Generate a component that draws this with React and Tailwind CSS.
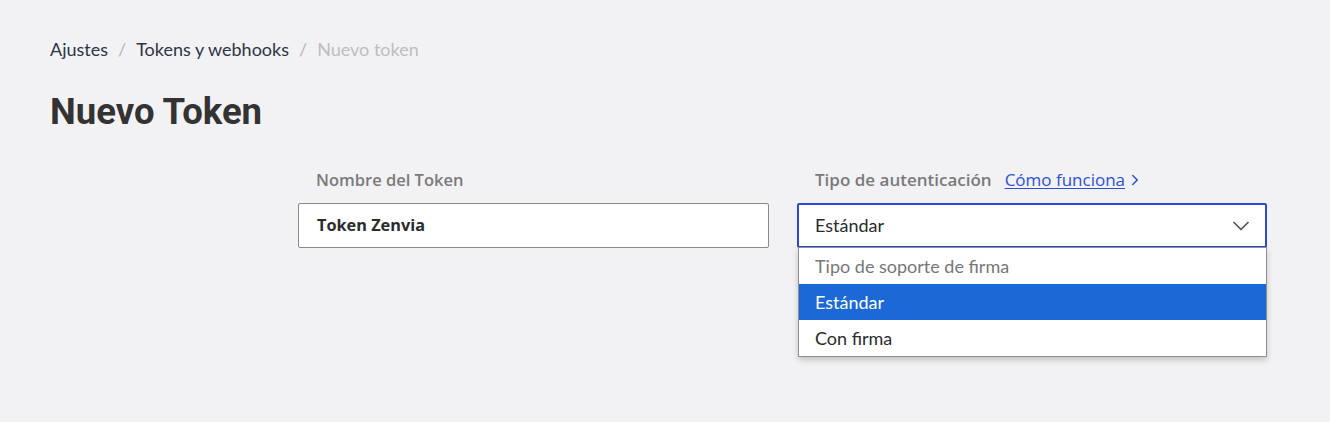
import React from 'react';
import { ChevronDown, ChevronRight } from 'lucide-react';

const App = () => {
    return (
        <div className="min-h-[422px] w-full bg-[#f2f2f4] pl-[50px] pt-[38px] text-[#333]" style={{ fontFamily: 'Lato, "Noto Sans", sans-serif' }}>

            {/* Breadcrumb */}
            <nav className="flex items-center text-[18px] leading-[22px]">
                <span className="text-[#2e3447]">Ajustes</span>
                <span className="mx-[10px] text-[#b5b5b8]">/</span>
                <span className="text-[#2e3447]">Tokens y webhooks</span>
                <span className="mx-[10px] text-[#b5b5b8]">/</span>
                <span className="text-[#bdbdc0]">Nuevo token</span>
            </nav>

            {/* Title */}
            <h1 className="mt-[30px] text-[36.5px] font-bold leading-[44px] text-[#333]" style={{ fontFamily: 'Roboto, sans-serif' }}>
                Nuevo Token
            </h1>

            {/* Form */}
            <div className="ml-[248px] mt-[35px] flex gap-[28px]" style={{ fontFamily: '"Open Sans", sans-serif' }}>

                {/* Token name */}
                <div className="w-[471px]">
                    <label className="block pl-[18px] text-[16.5px] font-semibold leading-[22px] text-[#7a7a7a]">Nombre del Token</label>
                    <div className="mt-[12px] flex h-[45px] items-center rounded-[2px] border border-[#8a8a8a] bg-white pl-[18px]">
                        <span className="text-[16.3px] font-bold text-[#2b2b2b]">Token Zenvia</span>
                    </div>
                </div>

                {/* Auth type */}
                <div className="w-[470px]">
                    <div className="flex items-center pl-[18px] leading-[22px]">
                        <span className="text-[17px] font-semibold text-[#7a7a7a]">Tipo de autenticación</span>
                        <a className="ml-[13px] text-[17px] text-[#2b50d8] underline underline-offset-2">Cómo funciona</a>
                        <ChevronRight className="ml-[1px] h-[18px] w-[18px] text-[#2b50d8]" strokeWidth={2} />
                    </div>
                    <div className="relative mt-[12px]">
                        <div className="flex h-[45px] items-center justify-between rounded-[2px] border-2 border-[#2a4ad2] bg-white pl-[16px] pr-[10px]">
                            <span className="text-[18px] text-[#2b2b2b]" style={{ fontFamily: 'Lato, sans-serif' }}>Estándar</span>
                            <ChevronDown className="h-[28px] w-[28px] text-[#555]" strokeWidth={1.5} absoluteStrokeWidth />
                        </div>

                        {/* Dropdown menu */}
                        <div className="absolute left-[1px] top-[44px] w-[469px] border border-[#8f8f8f] bg-white shadow-[0_3px_6px_rgba(0,0,0,0.2)]" style={{ fontFamily: 'Lato, sans-serif' }}>
                            <div className="flex h-[36px] items-center pl-[16px] text-[18px] text-[#777]">Tipo de soporte de firma</div>
                            <div className="flex h-[36px] items-center bg-[#1b69d6] pl-[16px] text-[18px] text-white">Estándar</div>
                            <div className="flex h-[36px] items-center pl-[16px] text-[18px] text-[#2b2b2b]">Con firma</div>
                        </div>
                    </div>
                </div>
            </div>
        </div>
    );
};

export default App;
